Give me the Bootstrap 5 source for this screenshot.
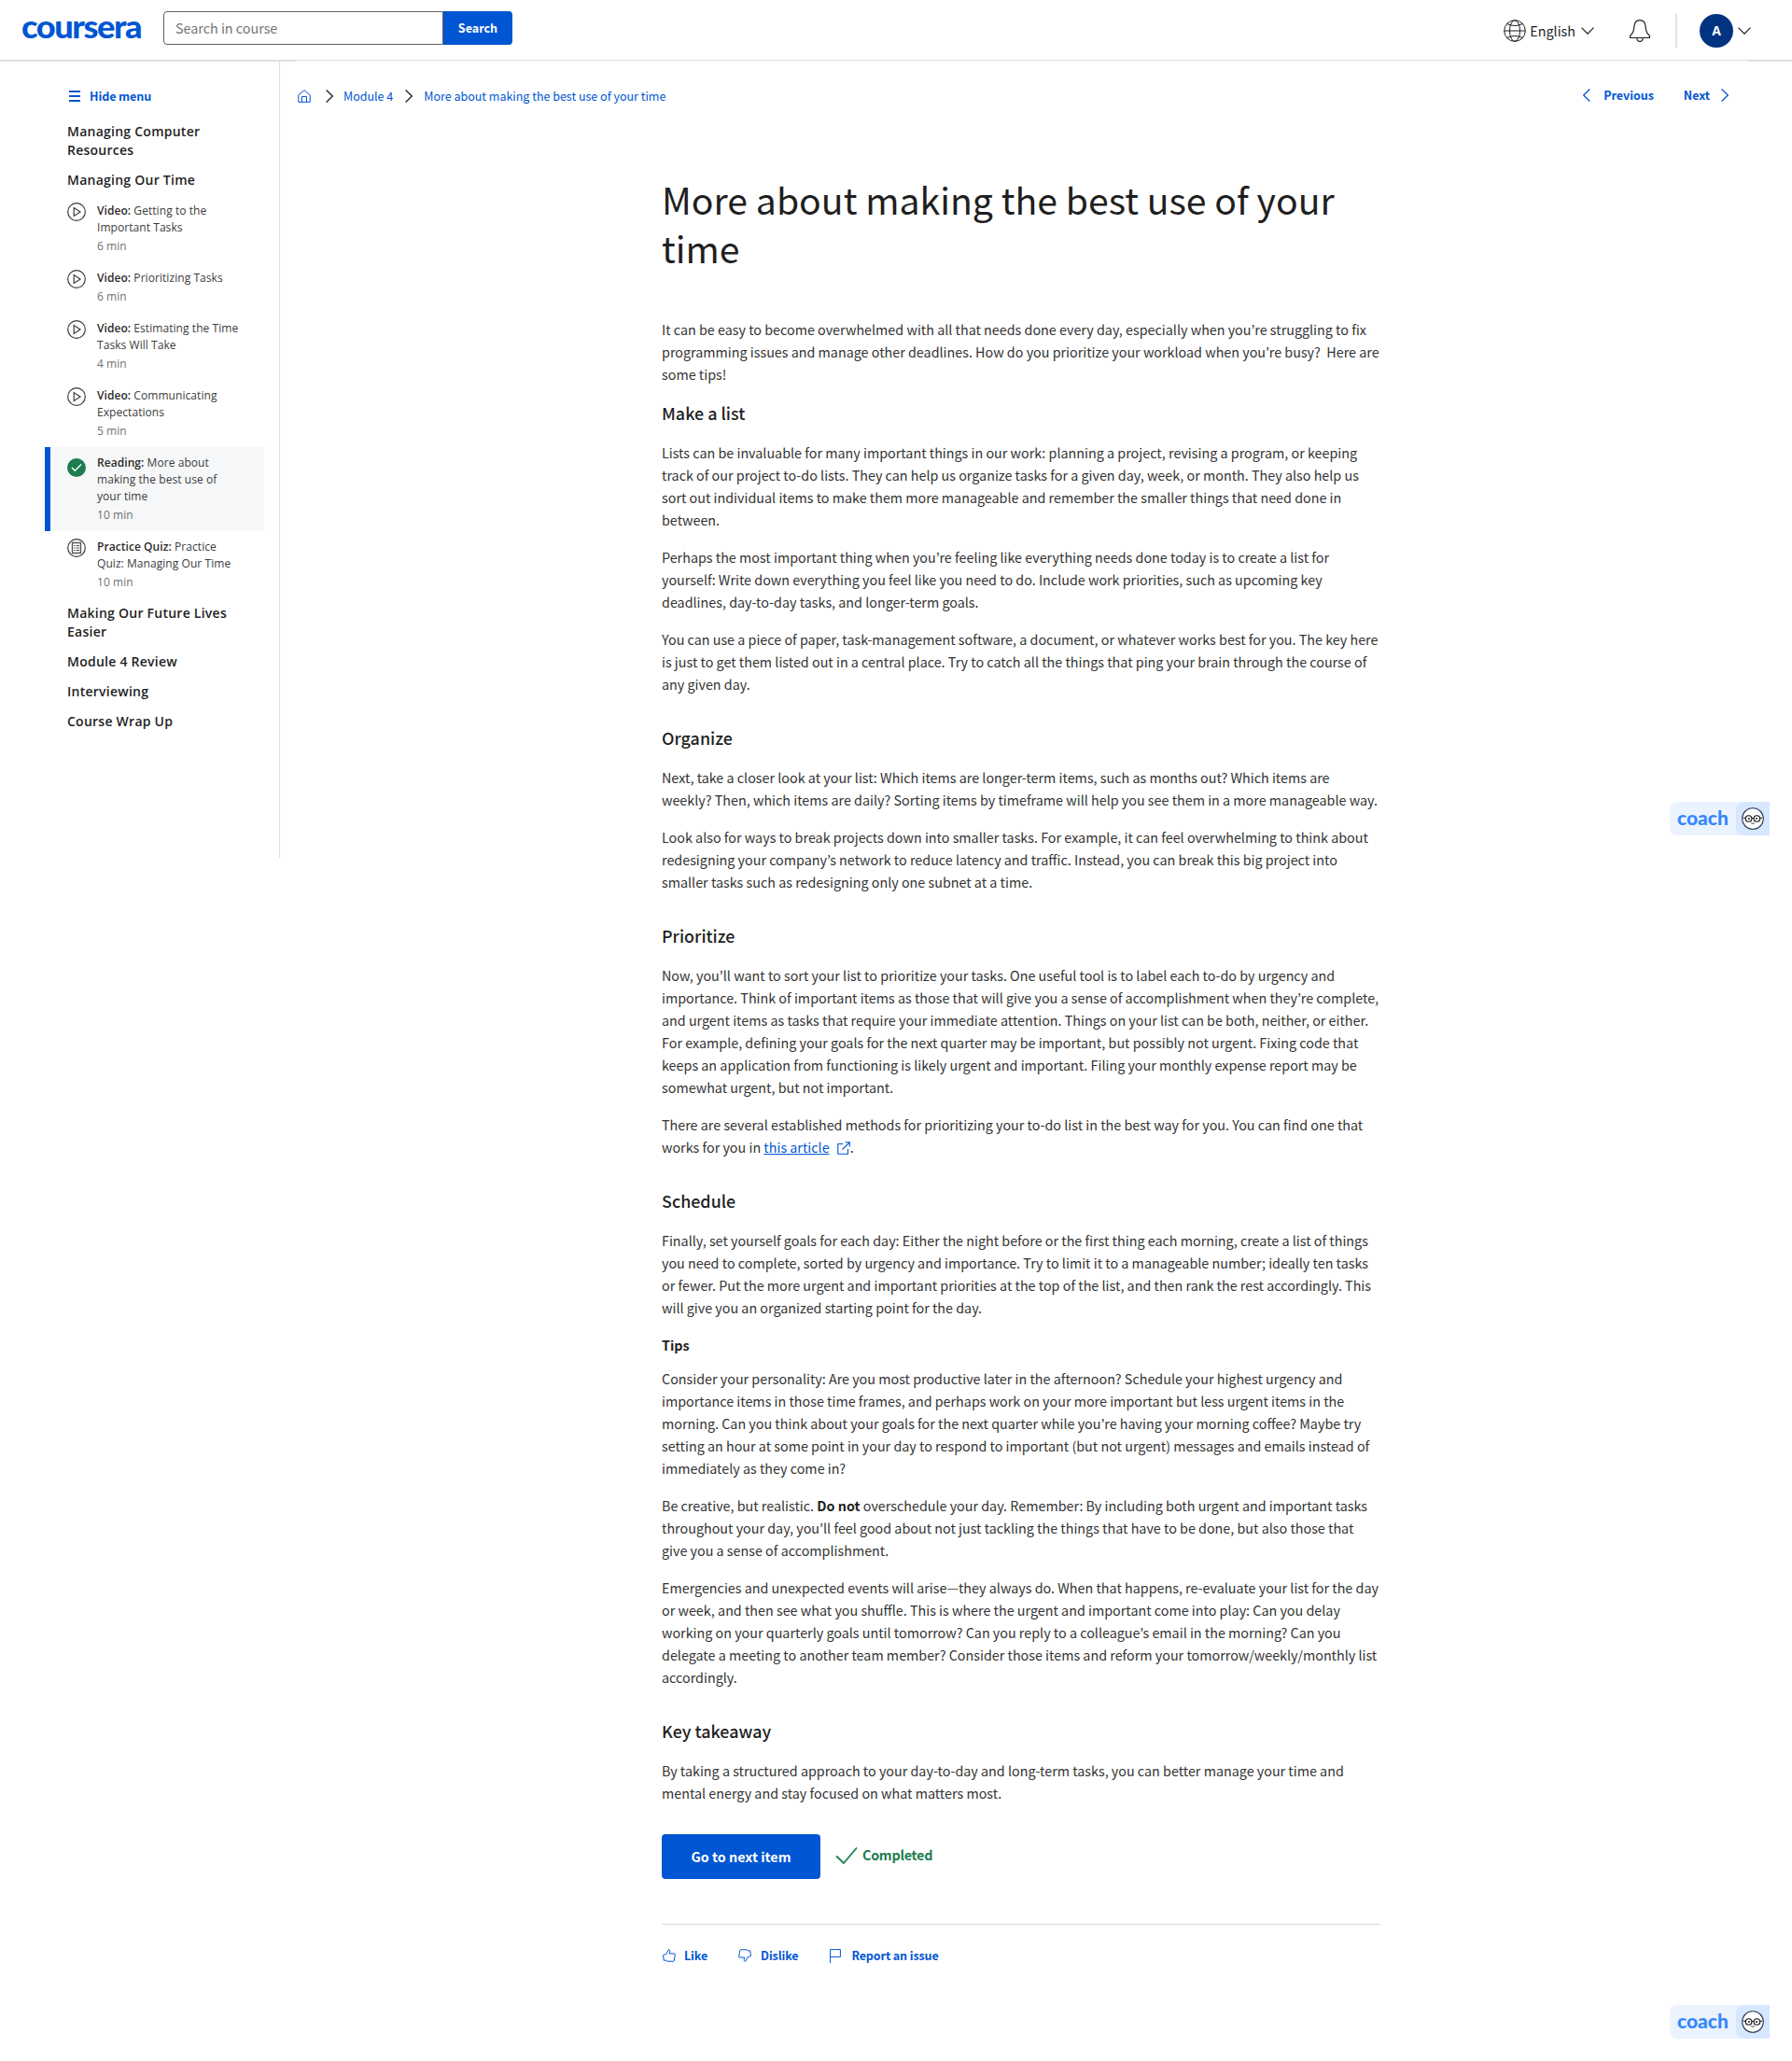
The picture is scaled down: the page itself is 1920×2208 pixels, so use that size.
<!DOCTYPE html>
<html lang="en">
<head>
<meta charset="utf-8">
<meta name="viewport" content="width=device-width, initial-scale=1">
<title>More about making the best use of your time | Coursera</title>
<link rel="stylesheet" href="https://cdn.jsdelivr.net/npm/bootstrap@5.3.0/dist/css/bootstrap.min.css">
<style>
  :root { --blue: #0056d2; --ink: #1f1f1f; --line: #e1e1e1; }
  body { font-family: "Noto Sans CJK KR", "Open Sans", sans-serif; font-size: 14.33px; line-height: 24px; color: #1f1f1f; background: #fff; height: 2208px; overflow-x: hidden; position: relative; }
  svg { display: block; flex: none; fill: none; stroke: currentColor; }
  a { color: var(--blue); text-decoration: none; }
  .topbar { height: 65px; border-bottom: 1px solid #dcdcdc; padding: 12px 44px 0 22px; }
  .logo-word { width: 131px; height: 52px; margin: -8px 22px 0 0; overflow: visible; }
  .logo-word text { font-family: Lato, sans-serif; font-weight: 900; font-size: 35px; letter-spacing: -1.4px; fill: var(--blue); stroke: none; }
  .search-box { width: 300px; height: 36px; border: 1px solid #636363; border-radius: 4px 0 0 4px; padding: 0 12px 2px; font-size: 14.33px; color: #1f1f1f; box-shadow: none; }
  .search-box::placeholder { color: #757575; }
  .search-btn { width: 74px; height: 36px; border-radius: 0 4px 4px 0; padding: 0; background: var(--blue); color: #fff; font-weight: 700; font-size: 12.54px; border: 0; }
  .tools { height: 42px; }
  .vr-line { width: 2px; height: 36px; background: #e1e1e1; }
  .avatar { width: 36px; height: 36px; background: #003380; color: #fff; font: 700 14px/36px "Open Sans", sans-serif; }
  .page-cols { background: linear-gradient(#e1e1e1, #e1e1e1) 0 0 / 316px 1px no-repeat, linear-gradient(#e1e1e1, #e1e1e1) 100% 0 / 48px 1px no-repeat; }
  .side { width: 300px; height: 854px; border-right: 1px solid var(--line); padding: 28px 16px 0 48px; font-family: "Open Sans", sans-serif; }
  .hide-menu { height: 20px; margin: 0 0 12px 26px; color: var(--blue); font: 700 12.54px/20px "Noto Sans CJK KR", sans-serif; letter-spacing: -.08px; }
  .group { margin: 0; padding: 6px 0 6px 24px; font-size: 14px; font-weight: 600; line-height: 20px; letter-spacing: .25px; color: #1f1f1f; }
  .lesson { padding: 8px 0 8px 24px; font-size: 12px; line-height: 18px; color: #3c3c3c; white-space: nowrap; gap: 12px; letter-spacing: .06px; }
  .lesson b { font-weight: 600; color: #2b2b2b; }
  .lesson small { display: block; margin-top: 2px; font-size: 12px; color: #707070; }
  .lesson.current { background: #f5f7f8; border-left: 6px solid var(--blue); padding-left: 18px; }
  .lesson.current svg { margin-top: 4px; }
  .crumbs { height: 76px; padding: 0 68px 0 19px; font-size: 12.54px; letter-spacing: -.02px; }
  .crumbs .trail { color: #1f1f1f; }
  .pager { font-weight: 700; padding-bottom: 2px; letter-spacing: -.05px; }
  .article { width: 770px; margin-left: 409px; white-space: nowrap; padding-top: 46px; }
  h1 { font-size: 39.2px; line-height: 52px; font-weight: 400; margin: 0 0 50px; }
  .article p { margin: 0 0 16px; color: #333; }
  .article strong { color: #1f1f1f; }
  .article h2 { font-size: 17.9px; line-height: 28px; font-weight: 500; margin: 31px 0 17px; }
  .article h2.first { margin-top: -1px; }
  .article h3 { font-size: 14.33px; line-height: 24px; font-weight: 700; margin: 16px 0 12px; }
  .inline-icon { display: inline-block; vertical-align: -2px; margin: 0 0 0 5px; }
  .next-btn { width: 170px; height: 48px; border-radius: 4px; background: var(--blue); color: #fff; font-weight: 700; font-size: 14.33px; padding: 0; border: 0; }
  .done { color: #1d7c50; font-weight: 700; height: 46px; letter-spacing: -.25px; }
  .done span { padding-bottom: 2px; }
  .actions { margin-top: 48px; border-top: 1px solid #dadada; padding-top: 21px; font-size: 12.54px; font-weight: 700; color: var(--blue); letter-spacing: -.12px; }
  .coach { position: absolute; right: 24px; width: 107px; height: 36px; background: #ebf3ff; border-radius: 8px 0 0 8px; overflow: hidden; }
  .coach span { width: 71px; padding-left: 8px; font: 900 21px/34px Lato, sans-serif; color: #3587fc; }
  .coach i { width: 36px; background: #d6e7ff; border-radius: 8px 0 0 8px; }
</style>
</head>
<body>
<svg width="0" height="0" class="position-absolute">
  <symbol id="play" viewBox="0 0 20 20"><circle cx="10" cy="10" r="9.3" stroke-width="1.2"/><path d="M7.2 5.6v8.8L14 10z" stroke-width="1.2"/></symbol>
  <symbol id="down" viewBox="0 0 14 8"><path d="M.5.6 7 7.2 13.500.6" stroke-width="1.2"/></symbol>
  <symbol id="right" viewBox="0 0 8 14"><path d="M.6.5 7.300 7 .6 13.500" stroke-width="1.2"/></symbol>
  <symbol id="thumb" viewBox="0 0 14 14"><path d="M.6 6.500 4 5.200 6.300.700c1.300 0 1.700 1 1.500 2.100L7.400 5h5.100c.6 0 .9.500.8 1l-1 6.300c-.1.600-.5 1-1.100 1L5 13.200l-1.500-1H1.200z"/></symbol>
  <symbol id="face" viewBox="0 0 24 24"><circle cx="12" cy="12" r="11.3" fill="#fff" stroke="#26304a" stroke-width="1.1"/><g stroke="#111" stroke-width="1.1"><circle cx="7.600" cy="12" r="3.300"/><circle cx="16.400" cy="12" r="3.300"/><path d="M10.900 11.500h2.200M1.800 11.300h2.500M19.700 11.300h2.500"/><path d="M10.200 16.800q1.800 1 3.600 0" stroke-width=".8"/></g><g fill="#111" stroke="none"><circle cx="8" cy="12" r="1"/><circle cx="16" cy="12" r="1"/></g></symbol>
</svg>

<header class="topbar d-flex align-items-start">
  <svg class="logo-word" viewBox="0 -8 131 52"><text x="1" y="29" textLength="128" lengthAdjust="spacingAndGlyphs">coursera</text></svg>
  <form class="d-flex">
    <input class="form-control search-box" placeholder="Search in course" aria-label="Search in course">
    <button class="btn search-btn" type="button">Search</button>
  </form>
  <div class="tools d-flex align-items-center ms-auto">
    <svg width="24" height="24" viewBox="0 0 24 24" stroke="#555"><circle cx="12" cy="12" r="11.300"/><ellipse cx="12" cy="12" rx="5.500" ry="11.300"/><path d="M.7 12h22.600M3.500 4.500q8.500 4 17 0M3.500 19.500q8.500-4 17 0"/></svg>
    <span style="margin-left:4px">English</span>
    <svg width="14" height="8" style="margin-left:6px"><use href="#down"/></svg>
    <svg width="22" height="24" viewBox="0 0 22 24" style="margin-left:38px"><path d="M.6 19.500v-2.300c2.900-2 3.900-4.700 4.300-9.700C5.200 3.300 7.500.6 11 .6s5.800 2.700 6.100 6.900c.4 5 1.400 7.700 4.300 9.700v2.300zM7.800 19.700c.2 2.500 1.500 3.700 3.200 3.700s3-1.200 3.200-3.700" stroke-width="1.2"/></svg>
    <span class="vr-line" style="margin-left:27px"></span>
    <span class="avatar rounded-circle text-center" style="margin-left:24px">A</span>
    <svg width="14" height="8" style="margin-left:5px"><use href="#down"/></svg>
  </div>
</header>

<div class="page-cols d-flex">
  <nav class="side flex-shrink-0">
    <div class="hide-menu d-flex align-items-center">
      <svg width="12" height="12" viewBox="0 0 12 12"><path d="M0 1h12M0 6h12M0 11h12" stroke-width="2"/></svg>
      <span style="margin-left:10px">Hide menu</span>
    </div>
    <h6 class="group">Managing Computer<br>Resources</h6>
    <h6 class="group">Managing Our Time</h6>
    <div class="lesson d-flex"><svg width="20" height="20"><use href="#play"/></svg><div><b>Video:</b> Getting to the<br>Important Tasks<small>6 min</small></div></div>
    <div class="lesson d-flex"><svg width="20" height="20"><use href="#play"/></svg><div><b>Video:</b> Prioritizing Tasks<small>6 min</small></div></div>
    <div class="lesson d-flex"><svg width="20" height="20"><use href="#play"/></svg><div><b>Video:</b> Estimating the Time<br>Tasks Will Take<small>4 min</small></div></div>
    <div class="lesson d-flex"><svg width="20" height="20"><use href="#play"/></svg><div><b>Video:</b> Communicating<br>Expectations<small>5 min</small></div></div>
    <div class="lesson current d-flex"><svg width="20" height="20" viewBox="0 0 20 20"><circle cx="10" cy="10" r="10" fill="#1d7c50" stroke="none"/><path d="m5 10 3.300 3.300L15 6.600" stroke="#fff" stroke-width="1.400"/></svg><div><b>Reading:</b> More about<br>making the best use of<br>your time<small>10 min</small></div></div>
    <div class="lesson d-flex"><svg width="20" height="20" viewBox="0 0 20 20"><circle cx="10" cy="10" r="9.300" stroke-width="1.200"/><path d="M5.500 4.500h9v11h-9z" stroke="#555" stroke-width="1.400"/><path d="M7.300 7.500h1.400M9.700 7.500h3.200M7.300 10h1.400M9.700 10h3.200M7.300 12.500h1.400M9.700 12.500h3.200"/></svg><div><b>Practice Quiz:</b> Practice<br>Quiz: Managing Our Time<small>10 min</small></div></div>
    <h6 class="group">Making Our Future Lives<br>Easier</h6>
    <h6 class="group">Module 4 Review</h6>
    <h6 class="group">Interviewing</h6>
    <h6 class="group">Course Wrap Up</h6>
  </nav>

  <main class="flex-grow-1">
    <div class="crumbs d-flex align-items-center justify-content-between">
      <div class="trail d-flex align-items-center">
        <a href="#"><svg width="14" height="14" viewBox="0 0 14 14"><path d="M.8 5.800 7 .7l6.200 5.100v7.500H.8zM4.500 13V7.500h5V13"/></svg></a>
        <svg width="8" height="14" style="margin:0 11px 0 16px"><use href="#right"/></svg>
        <a href="#">Module 4</a>
        <svg width="8" height="14" style="margin:0 12px 0 13px"><use href="#right"/></svg>
        <a href="#">More about making the best use of your time</a>
      </div>
      <div class="pager d-flex align-items-center">
        <a href="#" class="d-flex align-items-center"><svg width="8" height="14" viewBox="0 0 8 14" style="margin-right:14px"><path d="M7.400.5.7 7l6.700 6.500" stroke-width="1.200"/></svg>Previous</a>
        <a href="#" class="d-flex align-items-center" style="margin-left:32px">Next<svg width="8" height="14" style="margin-left:12px"><use href="#right"/></svg></a>
      </div>
    </div>

    <article class="article">
      <h1>More about making the best use of your<br>time</h1>
      <p>It can be easy to become overwhelmed with all that needs done every day, especially when you’re struggling to fix<br>programming issues and manage other deadlines. How do you prioritize your workload when you’re busy?&nbsp; Here are<br>some tips!</p>
      <h2 class="first">Make a list</h2>
      <p>Lists can be invaluable for many important things in our work: planning a project, revising a program, or keeping<br>track of our project to-do lists. They can help us organize tasks for a given day, week, or month. They also help us<br>sort out individual items to make them more manageable and remember the smaller things that need done in<br>between.</p>
      <p>Perhaps the most important thing when you’re feeling like everything needs done today is to create a list for<br>yourself: Write down everything you feel like you need to do. Include work priorities, such as upcoming key<br>deadlines, day-to-day tasks, and longer-term goals.</p>
      <p>You can use a piece of paper, task-management software, a document, or whatever works best for you. The key here<br>is just to get them listed out in a central place. Try to catch all the things that ping your brain through the course of<br>any given day.</p>
      <h2>Organize</h2>
      <p>Next, take a closer look at your list: Which items are longer-term items, such as months out? Which items are<br>weekly? Then, which items are daily? Sorting items by timeframe will help you see them in a more manageable way.</p>
      <p>Look also for ways to break projects down into smaller tasks. For example, it can feel overwhelming to think about<br>redesigning your company’s network to reduce latency and traffic. Instead, you can break this big project into<br>smaller tasks such as redesigning only one subnet at a time.</p>
      <h2>Prioritize</h2>
      <p>Now, you’ll want to sort your list to prioritize your tasks. One useful tool is to label each to-do by urgency and<br>importance. Think of important items as those that will give you a sense of accomplishment when they’re complete,<br>and urgent items as tasks that require your immediate attention. Things on your list can be both, neither, or either.<br>For example, defining your goals for the next quarter may be important, but possibly not urgent. Fixing code that<br>keeps an application from functioning is likely urgent and important. Filing your monthly expense report may be<br>somewhat urgent, but not important.</p>
      <p>There are several established methods for prioritizing your to-do list in the best way for you. You can find one that<br>works for you in <a href="#"><u>this article</u> <svg class="inline-icon" width="14" height="14" viewBox="0 0 14 14"><path d="M6 2.500H.8v10.700h10.700V8M8.500.7h4.800v4.800M13.200.8 5.500 8.500" stroke-width="1.100"/></svg></a>.</p>
      <h2>Schedule</h2>
      <p>Finally, set yourself goals for each day: Either the night before or the first thing each morning, create a list of things<br>you need to complete, sorted by urgency and importance. Try to limit it to a manageable number; ideally ten tasks<br>or fewer. Put the more urgent and important priorities at the top of the list, and then rank the rest accordingly. This<br>will give you an organized starting point for the day.</p>
      <h3>Tips</h3>
      <p>Consider your personality: Are you most productive later in the afternoon? Schedule your highest urgency and<br>importance items in those time frames, and perhaps work on your more important but less urgent items in the<br>morning. Can you think about your goals for the next quarter while you’re having your morning coffee? Maybe try<br>setting an hour at some point in your day to respond to important (but not urgent) messages and emails instead of<br>immediately as they come in?</p>
      <p>Be creative, but realistic. <strong>Do not</strong> overschedule your day. Remember: By including both urgent and important tasks<br>throughout your day, you’ll feel good about not just tackling the things that have to be done, but also those that<br>give you a sense of accomplishment.</p>
      <p>Emergencies and unexpected events will arise—they always do. When that happens, re-evaluate your list for the day<br>or week, and then see what you shuffle. This is where the urgent and important come into play: Can you delay<br>working on your quarterly goals until tomorrow? Can you reply to a colleague’s email in the morning? Can you<br>delegate a meeting to another team member? Consider those items and reform your tomorrow/weekly/monthly list<br>accordingly.</p>
      <h2>Key takeaway</h2>
      <p>By taking a structured approach to your day-to-day and long-term tasks, you can better manage your time and<br>mental energy and stay focused on what matters most.</p>
      <div class="d-flex" style="margin-top:32px">
        <button class="btn next-btn" type="button">Go to next item</button>
        <div class="done d-flex align-items-center" style="margin-left:16px"><svg width="24" height="20" viewBox="0 0 24 20" style="margin-right:5px"><path d="m1 10.500 8 7.500L23 1.500" stroke-width="1.800"/></svg><span>Completed</span></div>
      </div>
      <div class="actions d-flex align-items-center">
        <svg width="14" height="14" style="margin:0 9px 0 1px"><use href="#thumb"/></svg><span>Like</span>
        <svg width="14" height="14" viewBox="0 0 14 14" style="margin:0 10px 0 33px"><use href="#thumb" width="14" height="14" transform="rotate(180 7 7)"/></svg><span>Dislike</span>
        <svg width="12" height="15" viewBox="0 0 12 15" style="margin:0 11px 0 34px"><path d="M.6 15V.6h10.800v7.800H.6"/></svg><span>Report an issue</span>
      </div>
    </article>
  </main>
</div>

<div class="coach d-flex" style="top:859px"><span>coach</span><i class="d-flex align-items-center justify-content-center"><svg width="24" height="24"><use href="#face"/></svg></i></div>
<div class="coach d-flex" style="top:2148px"><span>coach</span><i class="d-flex align-items-center justify-content-center"><svg width="24" height="24"><use href="#face"/></svg></i></div>
<script src="https://cdn.jsdelivr.net/npm/bootstrap@5.3.0/dist/js/bootstrap.bundle.min.js"></script>
</body>
</html>
